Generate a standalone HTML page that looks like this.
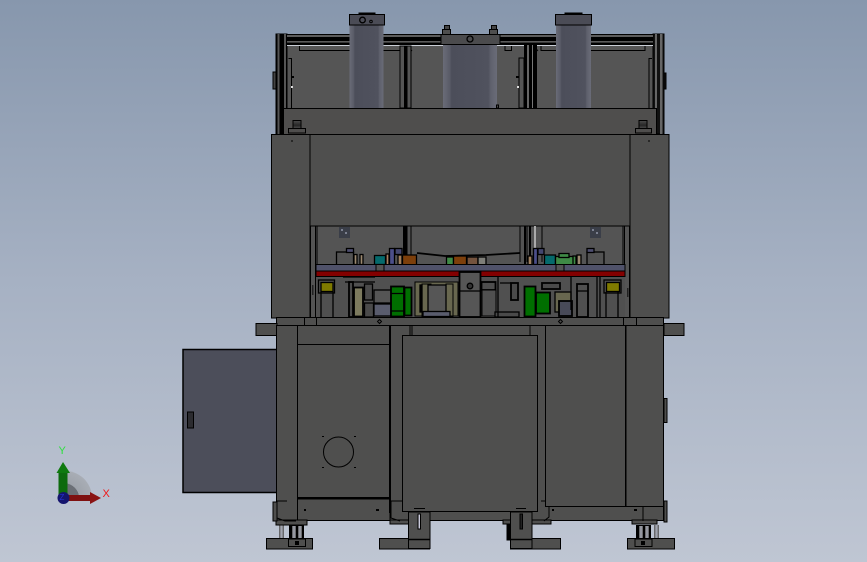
<!DOCTYPE html>
<html>
<head>
<meta charset="utf-8">
<style>
html,body{margin:0;padding:0;width:867px;height:562px;overflow:hidden;background:linear-gradient(180deg,#8797ad 0%,#a6b1c3 50%,#bfc6d3 100%);}
svg{display:block;position:absolute;left:0;top:0;}
text{font-family:"Liberation Sans",sans-serif;}
</style>
</head>
<body>
<svg width="867" height="562" viewBox="0 0 867 562" xmlns="http://www.w3.org/2000/svg">
<defs>
<linearGradient id="cyl" x1="0" x2="1" y1="0" y2="0">
<stop offset="0" stop-color="#6a6c78"/><stop offset=".12" stop-color="#5a5c68"/><stop offset=".16" stop-color="#4c4e5a"/><stop offset=".84" stop-color="#50525e"/><stop offset=".88" stop-color="#5e606c"/><stop offset="1" stop-color="#6a6c78"/>
</linearGradient>
<linearGradient id="rod" x1="0" x2="1" y1="0" y2="0">
<stop offset="0" stop-color="#555"/><stop offset=".5" stop-color="#a9adb9"/><stop offset="1" stop-color="#555"/>
</linearGradient>
<linearGradient id="bolt" x1="0" x2="0" y1="0" y2="1">
<stop offset="0" stop-color="#4c4c4c"/><stop offset=".6" stop-color="#262626"/><stop offset="1" stop-color="#4c4c4c"/>
</linearGradient>
<radialGradient id="q" cx="0" cy="1" r="1"><stop offset="0" stop-color="#6b6f76"/><stop offset=".55" stop-color="#6b6f76"/><stop offset=".56" stop-color="#9ea3ab"/><stop offset="1" stop-color="#a8adb5"/></radialGradient>
</defs>

<!-- side cabinet -->
<rect x="183" y="349.500" width="100" height="143" fill="#4c4e5a" stroke="#000" stroke-width="1.500"/>
<rect x="187.500" y="412" width="6" height="16" fill="#2c2c30" stroke="#000"/>

<!-- upper frame -->
<g stroke="#000" stroke-width="1">
<rect x="276.500" y="34.500" width="387" height="100" fill="#555"/>
<rect x="276" y="34" width="11" height="100" fill="#000"/>
<rect x="277.500" y="34" width="2" height="100" fill="#555" stroke="none"/>
<rect x="284" y="34" width="2" height="100" fill="#555" stroke="none"/>
<rect x="653" y="34" width="11" height="100" fill="#111"/>
<rect x="655" y="34" width="2" height="100" fill="#666" stroke="none"/>
<rect x="660" y="34" width="2.500" height="100" fill="#666" stroke="none"/>
<rect x="273" y="72" width="3" height="17" fill="#444"/>
<rect x="664" y="73" width="2" height="16" fill="#111"/>
</g>
<rect x="287" y="34" width="366" height="12" fill="#000"/>
<rect x="287" y="35" width="366" height="2" fill="#5c5c5c"/>
<rect x="287" y="41" width="366" height="1.600" fill="#5c5c5c"/>
<rect x="287" y="45" width="366" height="1" fill="#c9ced6"/>
<g fill="none" stroke="#000" stroke-width="1">
<path d="M299.500 46V50.500H400"/><path d="M541 46V50.500H645V46"/><path d="M505 46V50.500H511.500V46"/>
<path d="M288.500 58.500H291.500V108"/><path d="M652 58.500H649V108"/>
<path d="M400 50L405 46H408L412 51"/><path d="M538 51L534 46"/>
</g>
<!-- central posts -->
<rect x="400" y="46" width="11" height="62" fill="#555" stroke="#000"/>
<rect x="404" y="46" width="3.500" height="62" fill="#000"/>
<rect x="524" y="45" width="12" height="63" fill="#000"/>
<rect x="527" y="45" width="2" height="63" fill="#666"/>
<rect x="532" y="45" width="1" height="63" fill="#777"/>
<path d="M536.500 45V108M519.500 58.500V108" stroke="#000" fill="none"/>
<rect x="519" y="58" width="5" height="50" fill="#555" stroke="#000"/>
<rect x="291" y="76" width="3" height="2" fill="#000"/>
<rect x="516" y="76" width="3" height="2" fill="#000"/>
<rect x="291" y="86" width="2" height="2" fill="#ddd"/>
<rect x="517" y="86" width="2" height="2" fill="#ddd"/>

<!-- beam -->
<rect x="283.500" y="108.500" width="373" height="26" fill="#4f4e4d" stroke="#000"/>
<!-- bolts -->
<g stroke="#000">
<rect x="293" y="120.500" width="8" height="8" fill="url(#bolt)"/><rect x="288.500" y="128.500" width="17" height="4.500" fill="#4f4e4d"/>
<rect x="639" y="120.500" width="8" height="8" fill="url(#bolt)"/><rect x="635.500" y="128.500" width="16" height="4.500" fill="#4f4e4d"/>
</g>

<!-- cylinders -->
<g stroke="#000">
<rect x="349.500" y="25" width="34" height="83" fill="url(#cyl)" stroke="none"/>
<rect x="349.500" y="14.500" width="35" height="10.500" fill="#4b4c56"/>
<rect x="359" y="13" width="16" height="1.500" fill="#000"/>
<circle cx="362.500" cy="20" r="2.800" fill="#4b4c56" stroke-width="1.300"/>
<circle cx="371" cy="21.500" r="1.300" fill="#4b4c56"/>
<rect x="556" y="25" width="35" height="83" fill="url(#cyl)" stroke="none"/>
<rect x="555.500" y="14.500" width="36" height="10.500" fill="#4b4c56"/>
<rect x="565" y="13" width="17" height="1.500" fill="#000"/>
<rect x="443" y="45" width="54" height="63" fill="url(#cyl)" stroke="none"/>
<rect x="441" y="34.500" width="59" height="10" fill="#4b4b4d"/>
<circle cx="470" cy="39" r="3" fill="#4b4b4d" stroke-width="1.300"/>
<rect x="442.500" y="29.500" width="8" height="5" fill="#4e4e4e"/><rect x="444.500" y="25.500" width="5" height="4" fill="#444"/>
<rect x="489.500" y="29.500" width="8" height="5" fill="#4e4e4e"/><rect x="491.500" y="25.500" width="5" height="4" fill="#444"/>
<rect x="496.500" y="105" width="2" height="3" fill="#4e4e4e"/>
</g>

<!-- head frame -->
<g stroke="#000" stroke-width="1">
<rect x="310.500" y="226" width="319" height="92" fill="#545454"/>
<rect x="271.500" y="134.500" width="38.500" height="183.500" fill="#4f4f4e"/>
<rect x="630" y="134.500" width="39" height="183.500" fill="#4f4f4e"/>
<rect x="310" y="134.500" width="320" height="91.500" fill="#4f4f4e"/>
</g>
<path d="M291 141h2M648 141h2" stroke="#000"/>

<!-- opening details -->
<g stroke="#000" fill="none">
<path d="M317 226V272M623 226V272M315.500 226V318M624.500 226V318"/>
<path d="M403.500 226V262M411 226V262M520 226V262M542 226V262M527 226V262M535 226V262"/>
</g>
<rect x="404" y="226" width="3.500" height="38" fill="#000"/>
<rect x="524" y="226" width="2" height="38" fill="#000"/>
<rect x="529" y="226" width="2" height="38" fill="#000"/>
<rect x="534" y="226" width="2" height="38" fill="#aaa"/>
<rect x="339" y="227" width="11" height="11" fill="#3a3e48"/>
<rect x="590" y="227" width="11" height="11" fill="#3a3e48"/>
<g fill="#7b8090"><rect x="341" y="229" width="2" height="2"/><rect x="345" y="232" width="2" height="2"/><rect x="592" y="229" width="2" height="2"/><rect x="596" y="232" width="2" height="2"/></g>

<!-- top tooling row -->
<g stroke="#000" stroke-width="1.300">
<rect x="336.500" y="252" width="17" height="13" fill="#525252"/>
<rect x="346.500" y="248.500" width="7" height="4" fill="#4d4e70"/>
<rect x="354" y="254.500" width="3" height="10" fill="#9b8870"/>
<rect x="360" y="254.500" width="3" height="10" fill="#9b8870"/>
<rect x="374.500" y="255.500" width="11" height="9" fill="#056a6c"/>
<rect x="386" y="254" width="3" height="11" fill="#a88060"/>
<rect x="389.500" y="248.500" width="5" height="16" fill="#4c4f8a"/>
<rect x="395" y="248.500" width="7" height="6" fill="#43466f"/>
<rect x="398" y="255" width="4" height="10" fill="#a08060"/>
<rect x="402.500" y="255" width="14" height="10" fill="#7d3f0b"/>
<rect x="446.500" y="257" width="7" height="8" fill="#3f8a46"/>
<rect x="453.500" y="256" width="13" height="9" fill="#7d3f0b"/>
<rect x="467" y="257" width="11" height="8" fill="#74533e"/>
<rect x="478" y="257" width="8" height="8" fill="#7e7e78"/>
<rect x="528" y="256" width="4" height="9" fill="#a08060"/>
<rect x="533.500" y="248.500" width="4" height="16" fill="#4c4f8a"/>
<rect x="538" y="248.500" width="6" height="6" fill="#43466f"/>
<rect x="544.500" y="255" width="11" height="10" fill="#056a6c"/>
<rect x="555.500" y="256.500" width="18" height="9" fill="#3f8a46"/>
<rect x="559" y="253.500" width="10" height="4" fill="#3f8a46"/>
<rect x="573" y="256" width="3" height="9" fill="#3f8a46"/>
<rect x="577" y="255" width="4" height="10" fill="#9b8870"/>
<rect x="587" y="252" width="17" height="13" fill="#525252"/>
<rect x="587" y="248.500" width="7" height="4" fill="#4d4e70"/>
</g>
<path d="M417 253L445 256L486 255L520 253" stroke="#000" stroke-width="1.800" fill="none"/>

<!-- plate and red bar -->
<rect x="316" y="264.500" width="309" height="7" fill="#50526a" stroke="#000"/>
<rect x="376" y="264.500" width="8" height="7" fill="#545454" stroke="#000"/>
<rect x="556" y="264.500" width="8" height="7" fill="#545454" stroke="#000"/>
<rect x="316" y="271" width="309" height="5.500" fill="#830000" stroke="#000"/>

<!-- lower tooling -->
<rect x="316" y="277" width="309" height="40" fill="#505050"/>
<g stroke="#000" stroke-width="1.300">
<rect x="321" y="282.500" width="12" height="9" fill="#7f7a00"/>
<rect x="606.500" y="282.500" width="13" height="9" fill="#7f7a00"/>
<rect x="318.500" y="280" width="16" height="13" fill="none"/>
<rect x="604" y="280" width="17" height="13" fill="none"/>
<path d="M321 292V317M333 292V317M606 292V317M618 292V317" fill="none"/>
<rect x="354" y="287.500" width="9" height="29" fill="#7c7a5e" stroke-width="1.800"/>
<rect x="349" y="282" width="4" height="35" fill="#4a4a4a" stroke-width="1.800"/>
<rect x="364.500" y="284" width="8" height="16" fill="#4a4a4a"/>
<rect x="364.500" y="303" width="9" height="14" fill="#4a4a4a"/>
<rect x="374" y="304" width="17" height="12" fill="#595c6d"/>
<rect x="374" y="290" width="17" height="13" fill="#555"/>
<rect x="391" y="286.500" width="13" height="30" fill="#006f00" stroke-width="1.800"/>
<rect x="404.500" y="287.500" width="7" height="28" fill="#006f00" stroke-width="1.800"/>
<path d="M391 293.500H404M391 311H404" fill="none"/>
<path d="M415 282H458V316H415ZM422 284H431V317H422ZM446 284H453V317H446Z" fill="#68674f" stroke-width="1"/>
<rect x="420" y="285" width="2" height="27" fill="#000"/>
<rect x="428" y="285" width="18" height="27" fill="#565656"/>
<rect x="423" y="311.500" width="27" height="5" fill="#595c6d"/>
<rect x="459.500" y="272" width="21" height="45" fill="#565656" stroke-width="1.800"/>
<path d="M460 291H480" fill="none"/>
<circle cx="470" cy="286" r="2.800" fill="#333"/>
<rect x="481.500" y="282" width="14" height="8" fill="#4e4e4e" stroke-width="1.800"/>
<rect x="482" y="290" width="14" height="26" fill="#505050" stroke-width="1"/>
<rect x="495" y="312" width="24" height="5" fill="#4a4a4a"/>
<rect x="511" y="283" width="7" height="17" fill="#4a4a4a" stroke-width="1.800"/>
<rect x="524.500" y="286.500" width="11" height="30" fill="#006f00" stroke-width="1.800"/>
<rect x="536" y="292.500" width="14" height="21" fill="#006f00" stroke-width="1.800"/>
<rect x="542" y="283" width="18" height="6" fill="#4a4a4a" stroke-width="1.800"/>
<rect x="555" y="292" width="16" height="20" fill="#68674f"/>
<rect x="559" y="301" width="13" height="15" fill="#484a58" stroke-width="1.800"/>
<rect x="577" y="284" width="11" height="33" fill="#505050" stroke-width="1.800"/>
<path d="M577 291H588M597 277V317M600 277V317" fill="none"/>
<path d="M343 277H375M345 282H375M498 277V317M500 283H511M571 277V310" fill="none"/>
</g>
<rect x="312" y="285" width="1.500" height="10" fill="#222"/>
<rect x="627" y="288" width="1.500" height="9" fill="#222"/>

<!-- base rail -->
<rect x="276.500" y="317.500" width="387" height="8" fill="#4f4f4e" stroke="#000"/>
<path d="M304.500 318V325M316.500 318V325M623.500 318V325M636.500 318V325" stroke="#000"/>
<path d="M379.500 319.500l2 2-2 2-2-2zM560.500 319.500l2 2-2 2-2-2z" fill="none" stroke="#000"/>
<rect x="256" y="323.500" width="21" height="12" fill="#4f4f4e" stroke="#000"/>
<rect x="664" y="323.500" width="20" height="12" fill="#4f4f4e" stroke="#000"/>

<!-- feet -->
<g stroke="#000">
<rect x="266.500" y="538.500" width="46" height="10.500" fill="#4f4f4e"/>
<rect x="379.500" y="538.500" width="50" height="10.500" fill="#4f4f4e"/>
<rect x="510.500" y="538.500" width="50" height="10.500" fill="#4f4f4e"/>
<rect x="627.500" y="538.500" width="47" height="10.500" fill="#4f4f4e"/>
<rect x="288.500" y="539" width="17" height="7.500" fill="#4f4f4e"/>
<rect x="635" y="539" width="17" height="7.500" fill="#4f4f4e"/>
</g>
<rect x="279" y="525" width="5" height="13" fill="url(#rod)"/>
<rect x="654" y="525" width="5" height="13" fill="url(#rod)"/>
<rect x="289" y="525" width="15" height="13" fill="#000"/>
<rect x="292" y="526" width="4" height="12" fill="url(#rod)"/><rect x="298" y="526" width="4" height="12" fill="url(#rod)"/>
<rect x="636" y="525" width="15" height="13" fill="#000"/>
<rect x="639" y="526" width="4" height="12" fill="url(#rod)"/><rect x="645" y="526" width="4" height="12" fill="url(#rod)"/>
<rect x="295" y="541" width="4" height="4" fill="#000"/><rect x="641" y="541" width="4" height="4" fill="#000"/>

<!-- base cabinet -->
<g stroke="#000" stroke-width="1">
<rect x="276.500" y="325.500" width="387" height="195" fill="#4f4f4e"/>
<rect x="276.500" y="325.500" width="21" height="195" fill="#4f4f4e"/>
<rect x="297.500" y="325.500" width="93" height="19" fill="#4f4f4e"/>
<rect x="297.500" y="344.500" width="92" height="154" fill="#4f4f4e"/>
<rect x="390" y="325.500" width="22" height="195" fill="#4f4f4e"/>
<rect x="276" y="520" width="31" height="5" fill="#4f4f4e"/>
<rect x="390" y="520" width="20" height="4" fill="#4f4f4e"/>
<rect x="503" y="520" width="48" height="4" fill="#4f4f4e"/>
<rect x="632" y="520" width="25" height="4" fill="#4f4f4e"/>
<rect x="273" y="502" width="4" height="19" fill="#4f4f4e"/>
<rect x="664" y="501" width="3" height="21" fill="#4f4f4e"/>
<rect x="664" y="398.500" width="3" height="24" fill="#4f4f4e"/>
</g>
<rect x="389" y="326" width="2" height="187" fill="#000"/>
<rect x="297" y="497" width="93" height="2.500" fill="#000"/>
<circle cx="338.500" cy="452" r="15" fill="none" stroke="#000" stroke-width="1"/>
<path d="M322 436.500h2M354 436.500h2M322 467.500h2M354 467.500h2" stroke="#000"/>
<rect x="304" y="509" width="2" height="2" fill="#000"/>
<rect x="376" y="509" width="3" height="2" fill="#000"/>
<rect x="552" y="509" width="2" height="2" fill="#000"/>
<rect x="634" y="509" width="3" height="2" fill="#000"/>
<path d="M277 501H287M277 501V518L285 521H296M390 501H402M391 501V518L400 521M548 501H541M544 521L549 517V497" fill="none" stroke="#000"/>

<!-- door frame & right panel -->
<rect x="545.500" y="325.500" width="118" height="181" fill="#4f4f4e" stroke="#000"/>
<rect x="625" y="326" width="1.500" height="180" fill="#000"/>
<path d="M643 506V521" stroke="#000"/>
<path d="M410 325.500V335M530 325.500V335" stroke="#000"/>
<rect x="402.500" y="335.500" width="135" height="176" fill="#4f4f4e" stroke="#000"/>
<!-- door brackets -->
<g stroke="#000">
<rect x="408.500" y="512" width="21.500" height="36.500" fill="#4f4f4e"/>
<rect x="510.500" y="512" width="21.500" height="36.500" fill="#4f4f4e"/>
<path d="M408.500 539.500H430M510.500 539.500H532" stroke-width="1.500"/>
<rect x="418" y="514" width="2.500" height="15" fill="#ccd"/>
<rect x="520" y="514" width="2.500" height="15" fill="#222"/>
<rect x="507" y="525" width="3.500" height="15" fill="#000"/>
<path d="M414 508.500H425M516 508.500H526" />
</g>

<!-- triad -->
<path d="M63 498V471A27 27 0 0 1 92 498Z" fill="url(#q)"/>
<rect x="58.500" y="472" width="9" height="24" fill="#0d6a0d"/>
<path d="M56.500 473L63 462L70 473Z" fill="#0f7a0f"/>
<rect x="66" y="495" width="24" height="6" fill="#7e1010"/>
<path d="M90 492L101 498L90 504Z" fill="#8a1414"/>
<circle cx="63.500" cy="498" r="6" fill="#15156e"/>
<text x="58.500" y="454" font-size="11" fill="#2ee03f">Y</text>
<text x="102.500" y="497" font-size="11" fill="#f01818">X</text>
<text x="59.500" y="500" font-size="8" fill="#2230d0">Z</text>
</svg>
</body>
</html>
